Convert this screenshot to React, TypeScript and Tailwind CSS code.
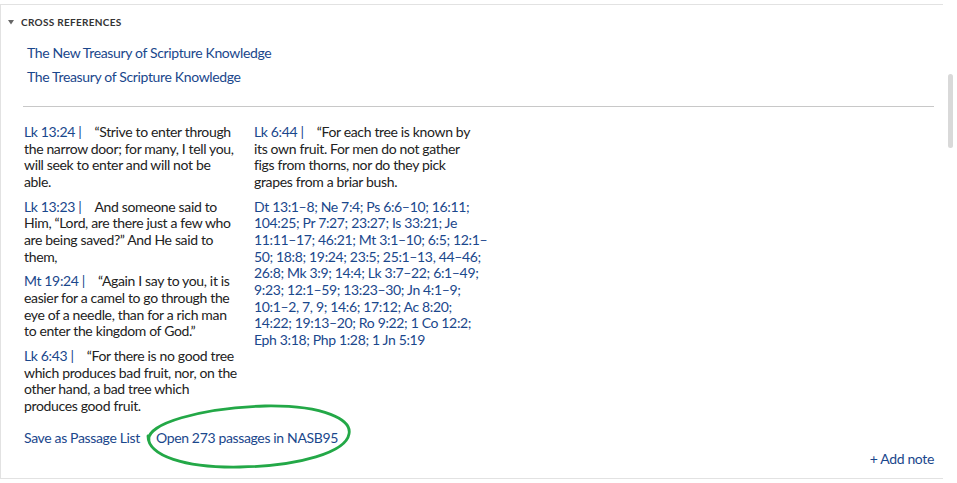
import React from "react";

const font = { fontFamily: "Lato, 'Liberation Sans', sans-serif" };

type Entry = { ref: string; lines: string[] };

const left: Entry[] = [
  {
    ref: "Lk 13:24",
    lines: ["\u201CStrive to enter through", "the narrow door; for many, I tell you,", "will seek to enter and will not be", "able."],
  },
  {
    ref: "Lk 13:23",
    lines: ["And someone said to", "Him, \u201CLord, are there just a few who", "are being saved?\u201D And He said to", "them,"],
  },
  {
    ref: "Mt 19:24",
    lines: ["\u201CAgain I say to you, it is", "easier for a camel to go through the", "eye of a needle, than for a rich man", "to enter the kingdom of God.\u201D"],
  },
  {
    ref: "Lk 6:43",
    lines: ["\u201CFor there is no good tree", "which produces bad fruit, nor, on the", "other hand, a bad tree which", "produces good fruit."],
  },
];

const right: Entry = {
  ref: "Lk 6:44",
  lines: ["\u201CFor each tree is known by", "its own fruit. For men do not gather", "figs from thorns, nor do they pick", "grapes from a briar bush."],
};

const refLines = [
  "Dt 13:1\u20138; Ne 7:4; Ps 6:6\u201310; 16:11;",
  "104:25; Pr 7:27; 23:27; Is 33:21; Je",
  "11:11\u201317; 46:21; Mt 3:1\u201310; 6:5; 12:1\u2013",
  "50; 18:8; 19:24; 23:5; 25:1\u201313, 44\u201346;",
  "26:8; Mk 3:9; 14:4; Lk 3:7\u201322; 6:1\u201349;",
  "9:23; 12:1\u201359; 13:23\u201330; Jn 4:1\u20139;",
  "10:1\u20132, 7, 9; 14:6; 17:12; Ac 8:20;",
  "14:22; 19:13\u201320; Ro 9:22; 1 Co 12:2;",
  "Eph 3:18; Php 1:28; 1 Jn 5:19",
];

function Verse({ e, last }: { e: Entry; last?: boolean }) {
  return (
    <p className={`${last ? "" : "mb-[8px]"} whitespace-nowrap text-[14px] leading-[16.67px] tracking-[-0.35px] text-[#222]`}>
      {e.lines.map((l, i) => (
        <span key={i} className="block">
          {i === 0 && (
            <>
              <span className="text-[#1a478c]">{e.ref} |</span>
              <span className="inline-block w-[13px]" />
            </>
          )}
          {l}
        </span>
      ))}
    </p>
  );
}

export default function App() {
  return (
    <div className="relative h-[483px] w-[957px] overflow-hidden bg-white" style={font}>
      <div className="mt-1 mr-[14px] h-[475px] border-l border-t border-b border-[#e2e2e2]">
        <div className="flex items-center gap-[7px] pl-[7px] pt-[10px]">
          <svg width="6" height="5" viewBox="0 0 6 5">
            <path d="M0 0 L6 0 L3 4.5 Z" fill="#666" />
          </svg>
          <span className="text-[10px] font-bold tracking-[0.3px] text-[#333]">CROSS REFERENCES</span>
        </div>
        <div className="flex flex-col pl-[26px] pt-[11px] text-[14px] leading-[24px] tracking-[-0.35px] text-[#1a478c]">
          <span>The New Treasury of Scripture Knowledge</span>
          <span>The Treasury of Scripture Knowledge</span>
        </div>
        <div className="ml-[22px] mr-[9px] mt-[17px] border-b border-[#c8c8c8]" />
        <div className="flex gap-[14px] pl-[23px] pt-[17px]">
          <div className="w-[216px]">
            {left.map((e, i) => (
              <Verse key={e.ref} e={e} last={i === left.length - 1} />
            ))}
          </div>
          <div className="w-[220px]">
            <Verse e={right} />
            <p className="whitespace-nowrap text-[14px] leading-[16.67px] tracking-[-0.35px] text-[#1a478c]">
              {refLines.map((l, i) => (
                <span key={i} className="block">
                  {l}
                </span>
              ))}
            </p>
          </div>
        </div>
        <div className="flex gap-[16px] pl-[23px] pt-[14px] text-[14px] leading-[17px] tracking-[-0.35px] text-[#1a478c]">
          <span>Save as Passage List</span>
          <span>Open 273 passages in NASB95</span>
        </div>
        <div className="flex justify-end pr-[9px] pt-[4px] text-[14px] leading-[17px] tracking-[-0.35px] text-[#1a478c]">
          <span>+ Add note</span>
        </div>
      </div>
      <div className="absolute left-[948px] top-[74px] h-[74px] w-[5px] rounded-full bg-[#d9d9d9]" />
      <svg className="absolute left-[140px] top-[400px]" width="220" height="75" viewBox="0 0 220 75">
        <path
          d="M9 40 C 6 24, 60 8, 125 6 C 185 5, 212 20, 209 34 C 206 52, 160 66, 100 67 C 45 68, 8 56, 8 36"
          fill="none"
          stroke="#23a847"
          strokeWidth="2.8"
          strokeLinecap="round"
        />
      </svg>
    </div>
  );
}
